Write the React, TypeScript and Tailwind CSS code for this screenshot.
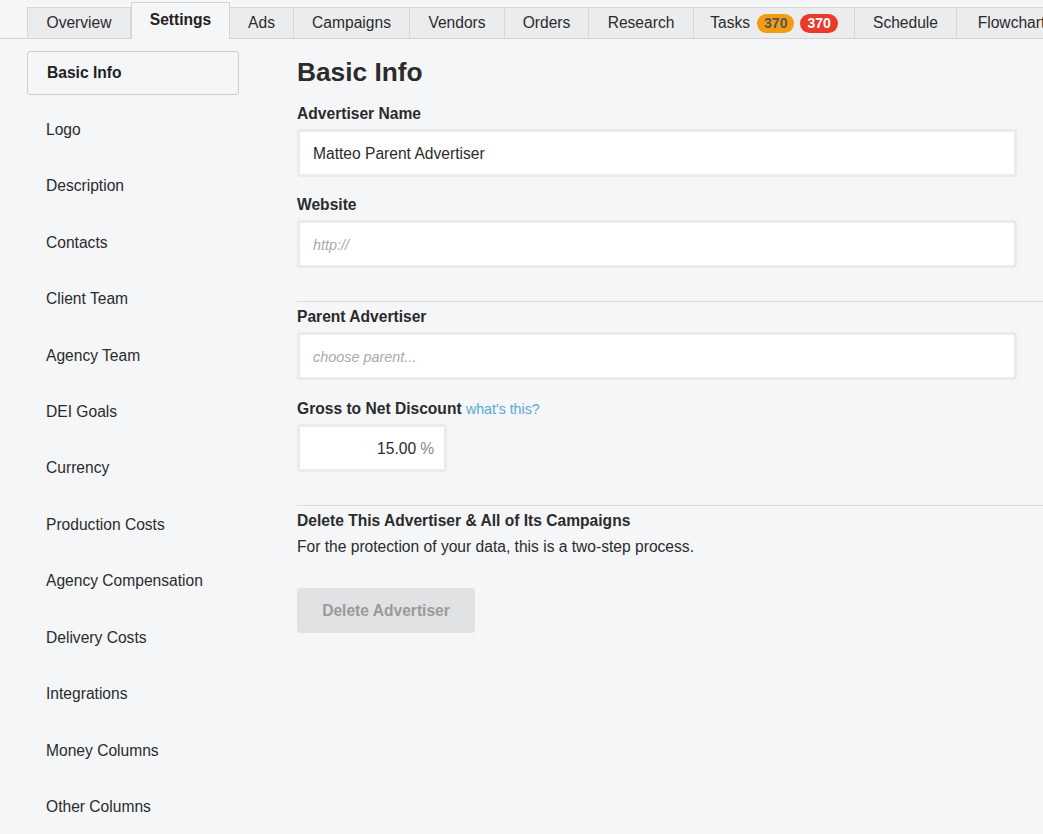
import React from "react";

type Tab = { label: string; w: string; active?: boolean; badges?: boolean };

const tabs: Tab[] = [
  { label: "Overview", w: "w-[104px]" },
  { label: "Settings", w: "w-[99px]", active: true },
  { label: "Ads", w: "w-[64px]" },
  { label: "Campaigns", w: "w-[116px]" },
  { label: "Vendors", w: "w-[95px]" },
  { label: "Orders", w: "w-[84px]" },
  { label: "Research", w: "w-[105px]" },
  { label: "Tasks", w: "w-[161px]", badges: true },
  { label: "Schedule", w: "w-[102px]" },
  { label: "Flowchart", w: "w-[110px]" },
];

const sections = [
  "Basic Info",
  "Logo",
  "Description",
  "Contacts",
  "Client Team",
  "Agency Team",
  "DEI Goals",
  "Currency",
  "Production Costs",
  "Agency Compensation",
  "Delivery Costs",
  "Integrations",
  "Money Columns",
  "Other Columns",
];

function TabBar() {
  return (
    <div className="flex h-[39px] items-end border-b border-[#d2d3d5] pl-[27px]">
      {tabs.map((t, i) =>
        t.active ? (
          <div
            key={t.label}
            className={`${t.w} -mb-px flex h-[37px] shrink-0 items-center justify-center border-x border-t border-[#d2d3d5] bg-[#f5f6f8] pb-[2px] text-[15.6px] font-bold text-[#222]`}
          >
            {t.label}
          </div>
        ) : (
          <div
            key={t.label}
            className={`${t.w} ${i === 0 ? "border-l" : ""} flex h-[31px] shrink-0 items-center justify-center gap-[6px] border-r border-t border-[#d6d7d9] bg-[#ebecee] text-[15.6px] text-[#2b2b2b]`}
          >
            <span>{t.label}</span>
            {t.badges && (
              <>
                <span className="ml-[1px] rounded-full bg-[#f39c12] px-[7px] text-[14px] font-bold leading-[19px] text-[#555]">
                  370
                </span>
                <span className="rounded-full bg-[#ea3a2a] px-[7px] text-[14px] font-bold leading-[19px] text-white">
                  370
                </span>
              </>
            )}
          </div>
        )
      )}
    </div>
  );
}

function Label({ children }: { children: React.ReactNode }) {
  return <div className="pt-[1px] text-[15.6px] font-bold leading-[20px] text-[#2b2b2b]">{children}</div>;
}

function Field({ value, placeholder }: { value?: string; placeholder?: string }) {
  return (
    <div className="mt-[5px] flex h-[48px] w-[720px] items-center rounded-[3px] border-[3px] border-[#ebebeb] bg-white px-[13px]">
      {value ? (
        <span className="pt-[1px] text-[15.6px] text-[#2b2b2b]">{value}</span>
      ) : (
        <span className="pt-[3px] text-[14.4px] italic text-[#aaa]">{placeholder}</span>
      )}
    </div>
  );
}

export default function App() {
  return (
    <div className="min-h-[834px] overflow-hidden bg-[#f5f6f8] font-['Liberation_Sans',Arial,sans-serif] text-[#2b2b2b]">
      <TabBar />
      <div className="flex gap-[58px] pl-[27px]">
        <nav className="flex w-[212px] shrink-0 flex-col gap-[12.46px] pt-[12px]">
          {sections.map((s, i) => (
            <div
              key={s}
              className={`flex h-[44px] items-center rounded-[3px] pl-[19px] text-[15.6px] ${
                i === 0 ? "border border-[#cdced0] font-bold text-[#222]" : "text-[#2b2b2b]"
              }`}
            >
              {s}
            </div>
          ))}
        </nav>

        <main className="flex-1 pt-[18px]">
          <h1 className="text-[26.3px] font-bold leading-[31px] text-[#2b2b2b]">Basic Info</h1>

          <div className="mt-[15px]">
            <Label>Advertiser Name</Label>
            <Field value="Matteo Parent Advertiser" />
          </div>

          <div className="mt-[17px]">
            <Label>Website</Label>
            <Field placeholder="http://" />
          </div>

          <div className="mt-[33px] h-px bg-[#dcdde0]" />

          <div className="mt-[4px]">
            <Label>Parent Advertiser</Label>
            <Field placeholder="choose parent..." />
          </div>

          <div className="mt-[18px]">
            <Label>
              Gross to Net Discount{" "}
              <span className="text-[14.2px] font-normal text-[#5ba8d5]">what's this?</span>
            </Label>
            <div className="mt-[5px] flex h-[48px] w-[150px] items-center justify-end gap-[4px] rounded-[3px] border-[3px] border-[#ebebeb] bg-white pr-[10px] pt-[1px]">
              <span className="text-[15.6px] text-[#2b2b2b]">15.00</span>
              <span className="text-[15.6px] text-[#888]">%</span>
            </div>
          </div>

          <div className="mt-[33px] h-px bg-[#dcdde0]" />

          <div className="mt-[4px]">
            <Label>Delete This Advertiser &amp; All of Its Campaigns</Label>
            <p className="mt-[6px] text-[15.6px] leading-[20px] text-[#2b2b2b]">
              For the protection of your data, this is a two-step process.
            </p>
            <button className="mt-[31px] flex h-[45px] w-[178px] items-center justify-center rounded-[3px] bg-[#e1e2e4] text-[15.6px] font-bold text-[#9a9a9a]">
              Delete Advertiser
            </button>
          </div>
        </main>
      </div>
    </div>
  );
}
